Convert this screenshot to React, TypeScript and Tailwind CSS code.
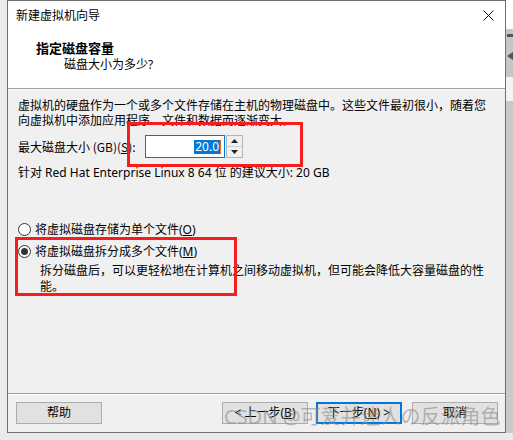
import React from 'react';

const Mn = ({ c }: { c: string }) => <span className="underline underline-offset-1">{c}</span>;

const Radio = ({ checked }: { checked?: boolean }) => (
  <span className="w-[13px] h-[13px] rounded-full border border-[#333333] bg-white flex items-center justify-center shrink-0">
    {checked && <span className="w-[7px] h-[7px] rounded-full bg-[#333333]" />}
  </span>
);

const Btn = ({ children, primary, className }: { children: React.ReactNode; primary?: boolean; className?: string }) => (
  <div
    className={
      'h-[22px] w-[86px] flex items-center justify-center bg-[#e1e1e1] text-[12px] ' +
      (primary ? 'border-2 border-[#0078d7] ' : 'border border-[#adadad] ') +
      (className ?? '')
    }
  >
    {children}
  </div>
);

export default function App() {
  return (
    <div className="relative w-[513px] h-[440px] overflow-hidden bg-white font-['Noto_Sans','Noto_Sans_CJK_SC',sans-serif] text-[12px] text-black">
      <div className="flex h-[433px]">
        {/* left backdrop */}
        <div className="w-[7px] bg-[#ececec]" />

        {/* dialog */}
        <div className="w-[499px] h-[433px] border border-[#6f6f6f] flex flex-col bg-[#f0f0f0]">
          {/* title + header */}
          <div className="bg-white h-[88px] border-b border-[#a0a0a0]">
            <div className="h-[29px] flex items-center pl-2 pr-[10px] justify-between">
              <span className="leading-[15px]">新建虚拟机向导</span>
              <svg width="11" height="11" viewBox="0 0 11 11" className="mr-[1px]">
                <path d="M0.5 0.5 L10.5 10.5 M10.5 0.5 L0.5 10.5" stroke="#111" strokeWidth="1" />
              </svg>
            </div>
            <div className="pl-[28px] pt-[10px] font-bold text-[13px] leading-[16px]">指定磁盘容量</div>
            <div className="pl-[56px] leading-[16px] mt-[1px]">磁盘大小为多少?</div>
          </div>
          <div className="h-px bg-white" />

          {/* body */}
          <div className="pl-[10px] pt-[8px] leading-[15px]">
            <p>
              虚拟机的硬盘作为一个或多个文件存储在主机的物理磁盘中。这些文件最初很小，随着您
              <br />
              向虚拟机中添加应用程序、文件和数据而逐渐变大。
            </p>

            <div className="flex items-center mt-[7px] h-[23px]">
              <span className="w-[127px] whitespace-nowrap font-['Noto_Sans_CJK_SC',sans-serif]">
                最大磁盘大小 (GB)(<Mn c="S" />):
              </span>
              <div className="w-[80px] h-[23px] border border-[#0078d7] bg-white flex items-center justify-end pr-[3px]">
                <span className="bg-[#0078d7] text-white leading-[14px] px-[1px]">20.0</span>
                <span className="w-px h-[14px] bg-[#e07020]" />
              </div>
              <div className="w-[17px] h-[23px] border border-[#b5b5b5] bg-[#f0f0f0] flex flex-col ml-px">
                <div className="flex-1 flex items-center justify-center border-b border-[#d0d0d0]">
                  <svg width="7" height="4" viewBox="0 0 7 4">
                    <path d="M3.5 0 L7 4 L0 4 Z" fill="#222" />
                  </svg>
                </div>
                <div className="flex-1 flex items-center justify-center">
                  <svg width="7" height="4" viewBox="0 0 7 4">
                    <path d="M0 0 L7 0 L3.5 4 Z" fill="#222" />
                  </svg>
                </div>
              </div>
            </div>

            <p className="mt-[7px]">针对 Red Hat Enterprise Linux 8 64 位 的建议大小: 20 GB</p>

            <div className="flex items-center gap-[4px] mt-[41px] h-[16px]">
              <Radio />
              <span>
                将虚拟磁盘存储为单个文件(<Mn c="O" />)
              </span>
            </div>
            <div className="flex items-center gap-[4px] mt-[6px] h-[16px]">
              <Radio checked />
              <span>
                将虚拟磁盘拆分成多个文件(<Mn c="M" />)
              </span>
            </div>
            <p className="ml-[22px] mt-[4px] leading-[16px]">
              拆分磁盘后，可以更轻松地在计算机之间移动虚拟机，但可能会降低大容量磁盘的性
              <br />
              能。
            </p>
          </div>

          {/* footer */}
          <div className="mt-auto">
            <div className="h-px bg-[#a0a0a0]" />
            <div className="h-px bg-white" />
            <div className="flex items-center pl-[8px] pr-[7px] pt-[7px] pb-[8px]">
              <Btn>帮助</Btn>
              <div className="flex-1" />
              <Btn>
                &lt; 上一步(<Mn c="B" />)
              </Btn>
              <Btn primary className="ml-[8px]">
                下一步(<Mn c="N" />) &gt;
              </Btn>
              <Btn className="ml-[10px]">取消</Btn>
            </div>
          </div>
        </div>

        {/* right backdrop */}
        <div className="w-[7px] flex flex-col">
          <div className="h-[29px] bg-white" />
          <div className="h-[48px] bg-[#c6c6c6] flex flex-col items-start">
            <div className="mt-[5px] w-[6px] h-[3px] bg-[#4a5a66] ml-px" />
            <div className="mt-[15px] w-[6px] h-[8px] bg-[#4a5a66] ml-px [clip-path:polygon(100%_0,100%_100%,0_50%)]" />
          </div>
          <div className="h-[24px] bg-[#f4f4f4]" />
          <div className="flex-1 bg-[#c9c9c9]" />
        </div>
      </div>
      <div className="h-[7px] bg-[#eaeaea]" />

      {/* annotations */}
      <div className="absolute left-[127px] top-[122px] w-[176px] h-[45px] border-[3px] border-[#f51d1d]" />
      <div className="absolute left-[15px] top-[237px] w-[222px] h-[59px] border-[3px] border-[#f51d1d]" />

      {/* watermark */}
      <div className="absolute left-[224px] top-[405px] text-[20px] leading-[24px] text-[#8c8c8c]/60 whitespace-nowrap">
        CSDN @可爱并迷人の反派角色
      </div>
    </div>
  );
}
